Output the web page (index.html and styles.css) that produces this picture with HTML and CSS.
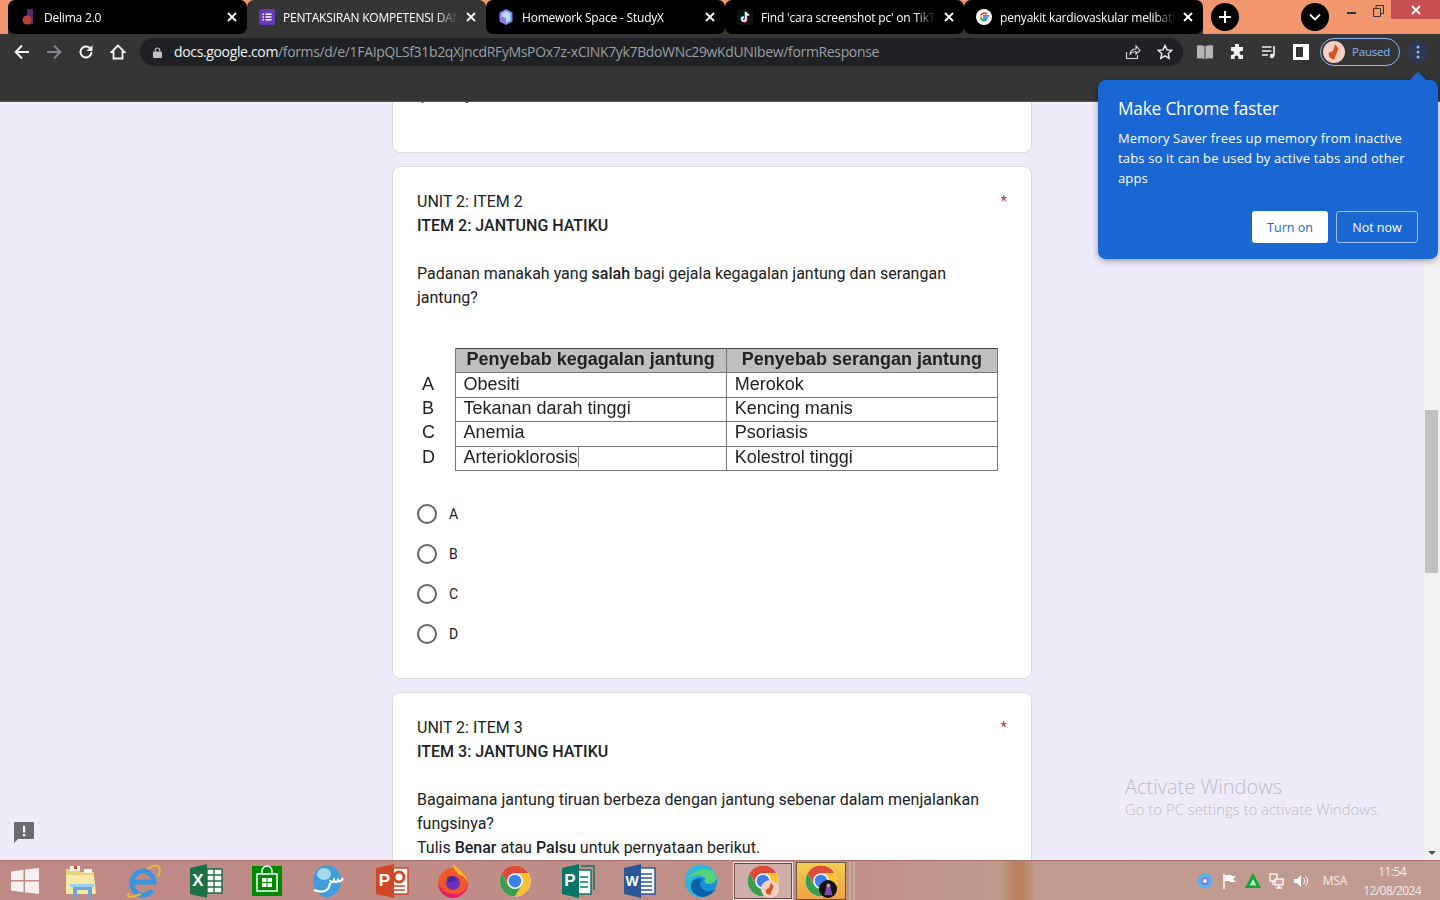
FILE: index.html
```html
<!DOCTYPE html>
<html>
  <head>
    <title>UNIT 2 - Google Forms</title>
    <link rel="stylesheet" href="styles.css">
  </head>
  <body>
    <svg class="defs" width="0" height="0">
      <symbol id="chrome" viewBox="0 0 48 48">
        <circle cx="24" cy="24" r="22" fill="#fff"/>
        <path fill="#dd4b39" d="M24 2a22 22 0 0 1 19.05 11H24a11 11 0 0 0-9.53 16.5L5 13A22 22 0 0 1 24 2z"/>
        <path fill="#fbc02d" d="M43.05 13A22 22 0 0 1 24 46l9.53-16.5A11 11 0 0 0 24 13z"/>
        <path fill="#3c9d4e" d="M24 46A22 22 0 0 1 5 13l9.47 16.5a11 11 0 0 0 19.06 0z"/>
        <circle cx="24" cy="24" r="9" fill="#3f7fe8"/>
      </symbol>
      <symbol id="close" viewBox="0 0 10 10">
        <path d="M1 1l8 8M9 1l-8 8" stroke="#fff" stroke-width="1.8" fill="none"/>
      </symbol>
    </svg>

    <div class="tabbar">
      <div class="tabs">
        <div class="tab first">
          <svg class="favicon" viewBox="0 0 16 16"><rect x="7" y="0" width="6" height="15" rx="1" fill="#5a2a6e"/><circle cx="7" cy="11" r="4.5" fill="#b8443f"/></svg>
          <span class="tab-title">Delima 2.0</span>
          <svg class="tab-close"><use href="#close"/></svg>
        </div>
        <div class="tab active">
          <svg class="favicon" viewBox="0 0 16 16"><rect width="16" height="16" rx="2" fill="#673ab7"/><path d="M3.5 4.5h1.5v1.500H3.500zM3.500 7.250h1.500v1.500H3.500zM3.500 10h1.500v1.500H3.500zM6.500 4.500h6v1.500h-6zM6.500 7.250h6v1.500h-6zM6.500 10h6v1.500h-6z" fill="#fff"/></svg>
          <span class="tab-title">PENTAKSIRAN KOMPETENSI DAN</span>
          <svg class="tab-close"><use href="#close"/></svg>
        </div>
        <div class="tab">
          <svg class="favicon" viewBox="0 0 16 16"><path d="M8 0l6.500 3.500v9L8 16l-6.500-3.500v-9z" fill="#8f7bf0"/><path d="M8 2l4.500 2.500v7L8 14z" fill="#a5e4f5"/><path d="M8 2L3.500 4.500v3L8 9z" fill="#d7c8fb"/></svg>
          <span class="tab-title">Homework Space - StudyX</span>
          <svg class="tab-close"><use href="#close"/></svg>
        </div>
        <div class="tab">
          <svg class="favicon" viewBox="0 0 16 16"><rect width="16" height="16" rx="3" fill="#111"/><path d="M9 3v7.200a2 2 0 1 1-2-2M9 3c.3 1.800 1.400 2.800 3 3" fill="none" stroke="#25f4ee" stroke-width="1.600" transform="translate(-.6 -.4)"/><path d="M9 3v7.200a2 2 0 1 1-2-2M9 3c.3 1.800 1.400 2.800 3 3" fill="none" stroke="#fe2c55" stroke-width="1.600" transform="translate(.6 .4)"/><path d="M9 3v7.200a2 2 0 1 1-2-2M9 3c.3 1.800 1.400 2.800 3 3" fill="none" stroke="#fff" stroke-width="1.400"/></svg>
          <span class="tab-title">Find 'cara screenshot pc' on TikTok</span>
          <svg class="tab-close"><use href="#close"/></svg>
        </div>
        <div class="tab last">
          <svg class="favicon" viewBox="0 0 16 16"><circle cx="8" cy="8" r="8" fill="#fff"/><path d="M13.300 6.900H8v2.200h3.100a3.300 3.300 0 0 1-6.300-1.100" fill="none" stroke="#4285f4" stroke-width="1.700"/><path d="M11 5.200A3.800 3.800 0 0 0 5 6" fill="none" stroke="#ea4335" stroke-width="1.700"/><path d="M5 6a4 4 0 0 0 0 3.500" fill="none" stroke="#fbbc05" stroke-width="1.700"/><path d="M5 9.800a3.800 3.800 0 0 0 6 .7" fill="none" stroke="#34a853" stroke-width="1.700"/></svg>
          <span class="tab-title">penyakit kardiovaskular melibatkan</span>
          <svg class="tab-close"><use href="#close"/></svg>
        </div>
      </div>
      <div class="round-btn new-tab">
        <svg width="14" height="14" viewBox="0 0 14 14"><path d="M7 1v12M1 7h12" stroke="#fff" stroke-width="2"/></svg>
      </div>
      <div class="round-btn tab-search">
        <svg width="12" height="8" viewBox="0 0 12 8"><path d="M1 1.500l5 5 5-5" stroke="#fff" stroke-width="1.800" fill="none"/></svg>
      </div>
      <div class="win-controls">
        <div class="win-btn">
          <svg width="10" height="10" viewBox="0 0 10 10"><rect x="0" y="6" width="9" height="2" fill="#333"/></svg>
        </div>
        <div class="win-btn">
          <svg width="11" height="12" viewBox="0 0 11 12"><path d="M.5 3.500h7v8h-7zM3 3.500V.500h7.500v8H7.500" fill="none" stroke="#333"/></svg>
        </div>
        <div class="win-close">
          <svg width="10" height="10"><use href="#close"/></svg>
        </div>
      </div>
    </div>

    <div class="toolbar">
      <div class="nav-icons">
        <svg class="tool" viewBox="0 0 16 16"><path d="M15 8H2M8 1.500L1.700 8 8 14.500" stroke="#f1f3f4" stroke-width="2" fill="none"/></svg>
        <svg class="tool" viewBox="0 0 16 16"><path d="M1 8h13M8 1.500L14.300 8 8 14.500" stroke="#80868b" stroke-width="2" fill="none"/></svg>
        <svg class="tool" viewBox="0 0 16 16"><path d="M13.500 8A5.500 5.500 0 1 1 11.800 4" stroke="#f1f3f4" stroke-width="2" fill="none"/><path d="M14.500 1v6h-6z" fill="#f1f3f4"/></svg>
        <svg class="tool" viewBox="0 0 16 16"><path d="M8 1.500L1.500 8H3.500v6.500h9V8h2z" stroke="#f1f3f4" stroke-width="1.800" fill="none"/></svg>
      </div>
      <div class="omnibox">
        <svg class="lock" viewBox="0 0 10 12"><path d="M2.500 5V3.500a2.500 2.500 0 0 1 5 0V5" stroke="#bdc1c6" fill="none" stroke-width="1.300"/><rect y="5" width="10" height="7" rx="1" fill="#bdc1c6"/></svg>
        <span class="url"><span class="url-host">docs.google.com</span>/forms/d/e/1FAIpQLSf31b2qXjncdRFyMsPOx7z-xCINK7yk7BdoWNc29wKdUNIbew/formResponse</span>
        <svg class="omni-icon" viewBox="0 0 16 16"><path d="M1.500 8v6.500h11V11M5 10c.5-3 3-5 6-5V2l4 4.500L11 10V7.500c-2.500 0-4.500 1-6 2.500z" stroke="#dadce0" stroke-width="1.100" fill="none"/></svg>
        <svg class="omni-icon" viewBox="0 0 16 16"><path d="M8 1.500l2 4.400 4.800.5-3.600 3.200 1 4.700L8 11.900l-4.200 2.400 1-4.700L1.200 6.400 6 5.900z" stroke="#f1f3f4" stroke-width="1.400" fill="none"/></svg>
      </div>
      <div class="ext-icons">
        <svg class="tool" viewBox="0 0 16 16"><path d="M0 1.500c2.500-.5 5-.5 7.500.5v13C5 14 2.500 14 0 14.500zM16 1.500c-2.500-.5-5-.5-7.500.5v13c2.500-1 5-1 7.500-.5z" fill="#b5b5b5"/></svg>
        <svg class="tool" viewBox="0 0 16 16"><path d="M6 1a2 2 0 0 1 4 0v2h4v4h-1.500a2 2 0 0 0 0 4H14v4H9.500v-1.500a2 2 0 0 0-4 0V15H2v-4h1a2 2 0 0 0 0-4H2V3h4z" fill="#f1f3f4"/></svg>
        <svg class="tool" viewBox="0 0 16 16"><path d="M1 3h9.500M1 7h9.500M1 11h6" stroke="#f1f3f4" stroke-width="1.600"/><path d="M13 2v9.500" stroke="#f1f3f4" stroke-width="1.600"/><circle cx="11" cy="12" r="2.200" fill="#f1f3f4"/></svg>
        <svg class="tool" viewBox="0 0 16 16"><rect x="1.500" y="1.500" width="13" height="13" fill="none" stroke="#fff" stroke-width="3"/><rect x="10" y="1" width="5" height="14" fill="#fff"/></svg>
      </div>
      <div class="profile">
        <svg class="avatar" viewBox="0 0 20 20"><circle cx="10" cy="10" r="10" fill="#f6d2c4"/><path d="M11 3l3 4-2 5-2 5-4-2-1-4 4-2z" fill="#d9561d"/></svg>
        <span class="profile-label">Paused</span>
      </div>
      <div class="menu-btn">
        <svg width="4" height="14" viewBox="0 0 4 14"><circle cx="2" cy="2" r="1.500" fill="#8ab4f8"/><circle cx="2" cy="7" r="1.500" fill="#8ab4f8"/><circle cx="2" cy="12" r="1.500" fill="#8ab4f8"/></svg>
      </div>
    </div>

    <div class="viewport">
      <div class="page">
        <div class="card card-cut">
          <div class="prev-answer"><div class="prev-line">pilihan y</div></div>
        </div>

        <div class="card">
          <div class="q-head">
            <div>
              <div>UNIT 2: ITEM 2</div>
              <div class="bold">ITEM 2: JANTUNG HATIKU</div>
            </div>
            <span class="req">*</span>
          </div>
          <p class="q-text">Padanan manakah yang <b>salah</b> bagi gejala kegagalan jantung dan serangan jantung?</p>
          <table class="q-table">
            <tr class="head"><th></th><th>Penyebab kegagalan jantung</th><th>Penyebab serangan jantung</th></tr>
            <tr><td class="letter">A</td><td>Obesiti</td><td>Merokok</td></tr>
            <tr><td class="letter">B</td><td>Tekanan darah tinggi</td><td>Kencing manis</td></tr>
            <tr><td class="letter">C</td><td>Anemia</td><td>Psoriasis</td></tr>
            <tr><td class="letter">D</td><td><span class="cursor">Arterioklorosis</span></td><td>Kolestrol tinggi</td></tr>
          </table>
          <div class="options">
            <div class="option"><span class="radio"></span>A</div>
            <div class="option"><span class="radio"></span>B</div>
            <div class="option"><span class="radio"></span>C</div>
            <div class="option"><span class="radio"></span>D</div>
          </div>
        </div>

        <div class="card">
          <div class="q-head">
            <div>
              <div>UNIT 2: ITEM 3</div>
              <div class="bold">ITEM 3: JANTUNG HATIKU</div>
            </div>
            <span class="req">*</span>
          </div>
          <p class="q-text">Bagaimana jantung tiruan berbeza dengan jantung sebenar dalam menjalankan fungsinya?<br>Tulis <b>Benar</b> atau <b>Palsu</b> untuk pernyataan berikut.</p>
        </div>
      </div>

      <div class="scrollbar">
        <div class="thumb"></div>
        <div class="arrow-down"></div>
      </div>

      <svg class="feedback" viewBox="0 0 22 22"><path d="M2 1h18a1 1 0 0 1 1 1v15a1 1 0 0 1-1 1H5l-4 4V2a1 1 0 0 1 1-1z" fill="#6a6a70"/><rect x="10" y="5" width="2.200" height="6.500" fill="#fff"/><rect x="10" y="13" width="2.200" height="2.200" fill="#fff"/></svg>

      <div class="watermark">
        <div class="wm-title">Activate Windows</div>
        <div class="wm-sub">Go to PC settings to activate Windows.</div>
      </div>

      <div class="bubble">
        <div class="bubble-title">Make Chrome faster</div>
        <div class="bubble-text">Memory Saver frees up memory from inactive tabs so it can be used by active tabs and other apps</div>
        <div class="bubble-btns">
          <div class="btn-on">Turn on</div>
          <div class="btn-off">Not now</div>
        </div>
      </div>
    </div>

    <div class="taskbar">
      <div class="task-apps">
        <div class="app">
          <svg class="win-logo" viewBox="0 0 28 26"><path d="M0 3.500L12.500 1.800V12H0zM14 1.600L28 0v12H14zM0 13.500h12.500v10.700L0 22.500zM14 13.500h14V26l-14-1.800z" fill="#f6f1f0"/></svg>
        </div>
        <div class="app">
          <svg class="app-icon" viewBox="0 0 36 36"><path d="M3 6h12l2 3h14v22H3z" fill="#e8d27a"/><path d="M3 12h28l2 19H3z" fill="#f7e9a5"/><rect x="7" y="3" width="10" height="5" fill="#f3f3e8"/><rect x="11" y="3" width="3" height="3" fill="#c94a3a"/><rect x="21" y="6" width="8" height="4" fill="#f3f3e8"/><path d="M10 35V25a3 3 0 0 1 3-3h13a3 3 0 0 1 3 3v10h-4v-8H14v8z" fill="#6aa8d8"/><rect x="7" y="21" width="24" height="3" fill="#9bd0f0"/></svg>
        </div>
        <div class="app">
          <svg class="app-icon" viewBox="0 0 36 36"><path d="M8 19h21A11 12 0 1 0 27 27" fill="none" stroke="#3a94e0" stroke-width="5"/><path d="M4 30C0 36 8 34 16 31M22 6c10-6 16-4 11 8" fill="none" stroke="#e7b93a" stroke-width="2"/></svg>
        </div>
        <div class="app">
          <svg class="app-icon" viewBox="0 0 36 36"><rect x="16" y="6" width="19" height="24" fill="#fff" stroke="#1d7044" stroke-width="1.500"/><path d="M20 6v24M27 6v24M16 12h19M16 18h19M16 24h19" stroke="#1d7044" stroke-width="1.400"/><path d="M3 5l17-4v34L3 31z" fill="#1d7044"/><text class="app-letter" x="11" y="23" text-anchor="middle">X</text></svg>
        </div>
        <div class="app">
          <svg class="app-icon" viewBox="0 0 36 36"><rect x="3" y="3" width="30" height="30" fill="#008a00"/><path d="M8 11h20v17H8z" fill="none" stroke="#fff" stroke-width="1.500"/><path d="M13 11V8a5 5 0 0 1 10 0v3" fill="none" stroke="#fff" stroke-width="1.500"/><path d="M13 15h4.500v4H13zM18.500 15H23v4h-4.500zM13 20h4.500v4H13zM18.500 20H23v4h-4.500z" fill="#fff"/></svg>
        </div>
        <div class="app">
          <svg class="app-icon" viewBox="0 0 36 36"><ellipse cx="16" cy="18" rx="14" ry="16" fill="#3f9ddb"/><ellipse cx="13" cy="11" rx="7" ry="6" fill="#a6d8f2"/><path d="M3 27c8 3 15 2 16-7M19 17c1 3 3 3 4 0 1 3 3 3 4 0 1 2 3 2 5-2" fill="none" stroke="#fff" stroke-width="2.200"/></svg>
        </div>
        <div class="app">
          <svg class="app-icon" viewBox="0 0 36 36"><rect x="16" y="5" width="19" height="26" fill="#fff" stroke="#d24726" stroke-width="1.500"/><circle cx="26" cy="14" r="5" fill="none" stroke="#d24726" stroke-width="3"/><path d="M20 23h12M20 27h12" stroke="#d24726" stroke-width="1.600"/><path d="M3 5l18-4v34L3 31z" fill="#d24726"/><text class="app-letter" x="11.500" y="23" text-anchor="middle">P</text></svg>
        </div>
        <div class="app">
          <svg class="app-icon" viewBox="0 0 36 36"><circle cx="18" cy="20" r="15" fill="#f0572b"/><path d="M3 20c0 8 7 15 15 15s15-7 15-15c-2 8-8 12-15 11C10 30 6 26 3 20z" fill="#e3206f"/><path d="M18 1c5 5 14 9 15 19-2-5-6-8-10-9-2-4-5-5-5-10z" fill="#fbb62c"/><circle cx="18" cy="20" r="7" fill="#6d32b8"/><path d="M12 15c4-3 9-1 10 3-3-1-6 0-8 2z" fill="#3f2a9c"/></svg>
        </div>
        <div class="app">
          <svg class="app-icon large"><use href="#chrome"/></svg>
        </div>
        <div class="app">
          <svg class="app-icon" viewBox="0 0 36 36"><rect x="16" y="7" width="16" height="24" fill="#fff" stroke="#077568" stroke-width="1.500"/><path d="M22 3h13v24" fill="none" stroke="#077568" stroke-width="1.500"/><path d="M21 14h8M21 19h8M21 24h8" stroke="#077568" stroke-width="1.500"/><path d="M3 5l17-4v34L3 31z" fill="#077568"/><text class="app-letter" x="11" y="23" text-anchor="middle">P</text></svg>
        </div>
        <div class="app">
          <svg class="app-icon" viewBox="0 0 36 36"><rect x="16" y="5" width="18" height="26" fill="#fff" stroke="#2b579a" stroke-width="1.500"/><path d="M20 11h11M20 15h11M20 19h11M20 23h11M20 27h11" stroke="#2b579a" stroke-width="1.600"/><path d="M3 5l17-4v34L3 31z" fill="#2b579a"/><text class="app-letter small" x="11" y="23" text-anchor="middle">W</text></svg>
        </div>
        <div class="app">
          <svg class="app-icon" viewBox="0 0 36 36"><circle cx="18" cy="18" r="16" fill="#1b8fd6"/><path d="M2 18A16 16 0 0 1 33 12c2 5-2 9-7 9-4 0-6-3-3-5-7-5-17 0-15 9 1 5 6 8 12 9A16 16 0 0 1 2 18z" fill="#2bb9d9"/><path d="M33 12c2 5-2 9-7 9-4 0-6-3-3-5-4-7-16-5-19 2C6 7 28 1 33 12z" fill="#56d27a"/><path d="M8 25c1 5 6 8 12 9 6-1 10-4 13-8-6 4-12 3-15-2-2-3-1-6 2-8-6-2-13 2-12 9z" fill="#0b5fa8"/></svg>
        </div>
        <div class="app running current">
          <svg class="app-icon large"><use href="#chrome"/></svg>
          <svg class="app-badge" viewBox="0 0 20 20"><circle cx="10" cy="10" r="10" fill="#f6d2c4"/><path d="M11 3l3 4-2 5-2 5-4-2-1-4 4-2z" fill="#d9561d"/></svg>
        </div>
        <div class="app running highlight">
          <svg class="app-icon large"><use href="#chrome"/></svg>
          <svg class="app-badge" viewBox="0 0 20 20"><circle cx="10" cy="10" r="10" fill="#111"/><path d="M6 17l2-9a2.500 2.500 0 0 1 5 0l2 9z" fill="#7e4bb0"/><circle cx="10.500" cy="6" r="2.200" fill="#caa08a"/></svg>
        </div>
        <div class="grip"></div>
      </div>
      <div class="tray">
        <svg class="tray-icon" viewBox="0 0 16 16"><circle cx="8" cy="8" r="7.500" fill="#4cb4ee"/><circle cx="8" cy="8" r="4" fill="#8a7ac8"/><circle cx="8" cy="8" r="2" fill="#cfe7f7"/></svg>
        <svg class="tray-icon" viewBox="0 0 16 16"><path d="M3 1v15" stroke="#fff" stroke-width="1.500"/><path d="M4 2h6l1 1h4l-3 3 3 3H9L8 8H4z" fill="#fff"/></svg>
        <svg class="tray-icon" viewBox="0 0 16 16"><path d="M8 0l8 15H0z" fill="#0fa63c"/><path d="M8 6l3.500 6.500h-7z" fill="#bfe9c0"/></svg>
        <svg class="tray-icon" viewBox="0 0 16 16"><rect x="1" y="1" width="7" height="7" fill="none" stroke="#fff" stroke-width="1.300"/><rect x="6" y="6" width="8" height="6" fill="#c8a8a0" stroke="#fff" stroke-width="1.300"/><path d="M10 12v3M7 15h6M4 8v4" stroke="#fff" stroke-width="1.300"/></svg>
        <svg class="tray-icon" viewBox="0 0 16 16"><path d="M1 6h3l4-4v12l-4-4H1z" fill="#fff"/><path d="M10.500 5a4 4 0 0 1 0 6M12.500 3a7 7 0 0 1 0 10" stroke="#fff" fill="none"/></svg>
        <span class="tray-lang">MSA</span>
        <div class="clock"><div>11:54</div><div>12/08/2024</div></div>
      </div>
    </div>
  </body>
</html>
```

FILE: styles.css
```css
* {
  box-sizing: border-box;
}
body {
  margin: 0;
  height: 900px;
  display: flex;
  flex-direction: column;
  overflow: hidden;
  font-family: "Open Sans", "Noto Sans", sans-serif;
}
.defs {
  position: absolute;
}

/* tab strip */
.tabbar {
  height: 34px;
  flex: none;
  display: flex;
  padding-left: 8px;
  background: #f2976f;
}
.tabs {
  display: flex;
  background: linear-gradient(#f2976f 50%, #353535 50%);
}
.tab {
  width: 239px;
  height: 34px;
  display: flex;
  align-items: center;
  padding: 0 10px 0 12px;
  background: #000;
  color: #fff;
  border-radius: 7px;
  font-size: 12px;
  letter-spacing: -0.2px;
}
.tab.active {
  background: #353535;
  border-radius: 7px 7px 0 0;
}
.favicon {
  width: 16px;
  height: 16px;
  flex: none;
  margin-right: 8px;
}
.tab-title {
  flex: 1;
  min-width: 0;
  white-space: nowrap;
  overflow: hidden;
  -webkit-mask-image: linear-gradient(90deg, #000 88%, transparent);
  mask-image: linear-gradient(90deg, #000 88%, transparent);
}
.tab-close {
  width: 10px;
  height: 10px;
  flex: none;
  margin-left: 8px;
}
.round-btn {
  width: 28px;
  height: 28px;
  border-radius: 50%;
  background: #000;
  display: flex;
  align-items: center;
  justify-content: center;
  margin-top: 3px;
}
.new-tab {
  margin-left: 8px;
}
.tab-search {
  margin-left: 62px;
}
.win-controls {
  margin-left: auto;
  display: flex;
  height: 19px;
}
.win-btn {
  width: 26px;
  height: 19px;
  padding-top: 2px;
  display: flex;
  align-items: center;
  justify-content: center;
}
.win-close {
  width: 49px;
  height: 19px;
  background: #c75050;
  display: flex;
  align-items: center;
  justify-content: center;
}

/* toolbar */
.toolbar {
  height: 68px;
  flex: none;
  display: flex;
  align-items: flex-start;
  padding-top: 4px;
  background: #353535;
  border-bottom: 1px solid #555;
}
.nav-icons {
  display: flex;
  width: 140px;
  height: 28px;
  align-items: center;
  padding-left: 14px;
  gap: 16px;
}
.tool {
  width: 16px;
  height: 16px;
  flex: none;
}
.omnibox {
  width: 1043px;
  height: 28px;
  flex: none;
  background: #202124;
  border-radius: 14px;
  display: flex;
  align-items: center;
  padding-left: 13px;
  padding-right: 10px;
}
.lock {
  width: 9px;
  height: 11px;
  flex: none;
}
.url {
  margin-left: 12px;
  margin-bottom: 1px;
  flex: 1;
  white-space: nowrap;
  font-size: 14px;
  letter-spacing: -0.35px;
  color: #9aa0a6;
}
.url-host {
  color: #f1f3f4;
}
.omni-icon {
  width: 16px;
  height: 16px;
  flex: none;
  margin-left: 16px;
}
.ext-icons {
  display: flex;
  height: 28px;
  align-items: center;
  gap: 16px;
  padding-left: 14px;
}
.profile {
  width: 80px;
  height: 28px;
  margin-left: 11px;
  flex: none;
  display: flex;
  align-items: center;
  border: 1px solid #8ab4f8;
  border-radius: 14px;
  padding-left: 2px;
}
.avatar {
  width: 22px;
  height: 22px;
}
.profile-label {
  margin-left: 7px;
  margin-bottom: 1px;
  font-size: 11.5px;
  letter-spacing: -0.2px;
  color: #8ab4f8;
}
.menu-btn {
  width: 22px;
  height: 22px;
  margin: 3px 0 0 7px;
  border-radius: 50%;
  background: #2f3a50;
  display: flex;
  align-items: center;
  justify-content: center;
}

/* page */
.viewport {
  flex: 1;
  min-height: 0;
  display: flex;
  position: relative;
  background: #f0ebf8;
}
.page {
  flex: 1;
  min-width: 0;
  display: flex;
  flex-direction: column;
  align-items: center;
  gap: 13px;
  overflow: hidden;
  font-family: Roboto, sans-serif;
  font-size: 16px;
  line-height: 24px;
  color: #202124;
}
.card {
  width: 640px;
  flex: none;
  background: #fff;
  border: 1px solid #dadce0;
  border-radius: 8px;
  padding: 23px 24px 34px;
}
.card-cut {
  height: 51px;
  border-top: 0;
  border-radius: 0 0 8px 8px;
  padding: 0 24px;
  overflow: hidden;
}
.prev-answer {
  height: 11px;
  background: #f8f9fa;
  padding-left: 4px;
  font-size: 14px;
}
.prev-line {
  line-height: 14px;
  margin-top: -14px;
}
.q-head {
  display: flex;
  justify-content: space-between;
}
.bold {
  font-weight: 500;
}
.q-text b {
  font-weight: 500;
}
.req {
  color: #d93025;
  line-height: 23px;
  font-size: 15px;
}
.q-text {
  margin: 24px 0 0;
}
.q-table {
  margin-top: 38px;
  width: 581px;
  table-layout: fixed;
  border-collapse: collapse;
  font-family: "Liberation Sans", Arial, sans-serif;
  font-size: 18px;
  line-height: 20px;
  color: #222;
  filter: blur(0.35px);
}
.q-table th,
.q-table td {
  height: 24.4px;
  padding: 0 0 3px 8px;
  border: 1px solid #777;
  text-align: left;
  white-space: nowrap;
}
.q-table th:first-child,
.q-table td.letter {
  width: 38px;
  padding: 0 0 3px 5px;
  border: 0;
  border-right: 1px solid #777;
}
.q-table .head th {
  background: #bfbfbf;
  font-size: 18px;
  font-weight: 700;
  padding: 0 0 3px;
  text-align: center;
  border-top: 1px solid #444;
}
.q-table .head th:first-child {
  background: none;
  border-top: 0;
}
.cursor {
  border-right: 1px solid #888;
}
.options {
  margin-top: 33px;
  display: flex;
  flex-direction: column;
  gap: 20px;
}
.option {
  display: flex;
  align-items: center;
  height: 20px;
  font-size: 14px;
  line-height: 20px;
}
.radio {
  width: 20px;
  height: 20px;
  margin-right: 12px;
  border: 2px solid #5f6368;
  border-radius: 50%;
}
.scrollbar {
  width: 16px;
  flex: none;
  display: flex;
  flex-direction: column;
  align-items: flex-start;
  padding: 308px 0 5px 1px;
  background: #f1f1f1;
}
.thumb {
  width: 13px;
  height: 163px;
  background: #c1c1c1;
}
.arrow-down {
  margin-top: auto;
  margin-left: 3px;
  border-top: 4px solid #505050;
  border-left: 4px solid transparent;
  border-right: 4px solid transparent;
}
.feedback {
  position: absolute;
  left: 13px;
  top: 719px;
  width: 22px;
  height: 22px;
}
.watermark {
  position: absolute;
  left: 1125px;
  top: 671px;
  color: #bcbac2;
  font-weight: 300;
  white-space: nowrap;
}
.wm-title {
  font-size: 20px;
  line-height: 27px;
}
.wm-sub {
  font-size: 14.9px;
  line-height: 19px;
}

/* memory saver bubble */
.bubble {
  position: absolute;
  left: 1098px;
  top: -22px;
  width: 340px;
  height: 179px;
  padding: 16px 20px;
  background: #1967d2;
  border-radius: 8px;
  box-shadow: 0 2px 6px rgba(0, 0, 0, 0.35);
  color: #fff;
}
.bubble::before {
  content: "";
  position: absolute;
  right: 12px;
  top: -8px;
  width: 16px;
  height: 16px;
  background: #1967d2;
  transform: rotate(45deg) scale(0.72);
}
.bubble-title {
  font-size: 17.3px;
  line-height: 26px;
  letter-spacing: -0.2px;
}
.bubble-text {
  margin-top: 6px;
  font-size: 13px;
  line-height: 20px;
  letter-spacing: 0.15px;
}
.bubble-btns {
  position: absolute;
  right: 20px;
  bottom: 16px;
  display: flex;
  gap: 8px;
  font-size: 12.5px;
}
.btn-on,
.btn-off {
  height: 32px;
  display: flex;
  align-items: center;
  justify-content: center;
  border-radius: 3px;
}
.btn-on {
  width: 76px;
  background: #fff;
  color: #1967d2;
}
.btn-off {
  width: 82px;
  border: 1px solid #a3c2ee;
}

/* windows taskbar */
.taskbar {
  height: 40px;
  flex: none;
  display: flex;
  align-items: center;
  justify-content: space-between;
  border-top: 1px solid #a9706b;
  background: linear-gradient(90deg, #bf8985 0%, #bf9088 60%, #bf9a8d 69.500%, #b98360 70.400%, #b98360 71%, #c19b8f 71.900%, #c19a90 100%);
}
.task-apps {
  display: flex;
  align-items: center;
  height: 39px;
}
.app {
  width: 62px;
  height: 39px;
  display: flex;
  align-items: center;
  justify-content: center;
  position: relative;
}
.app:first-child {
  width: 50px;
}
.app-icon {
  width: 36px;
  height: 36px;
}
.app-icon.large {
  width: 34px;
  height: 36px;
}
.win-logo {
  width: 28px;
  height: 26px;
}
.app-letter {
  fill: #fff;
  font-family: "Liberation Sans", sans-serif;
  font-size: 17px;
  font-weight: 700;
}
.app-letter.small {
  font-size: 14px;
}
.app.running {
  border: 1px solid #efe4e0;
  outline: 1px solid #6d4a45;
  outline-offset: -2px;
  margin-right: 3px;
  height: 38px;
}
.app.current {
  width: 60px;
  margin-left: 1px;
  background: #cfaea9;
}
.app.highlight {
  width: 50px;
  border-color: #6d5b3c;
  outline: 0;
  background: linear-gradient(#f0d04f, #f0a044);
}
.app-badge {
  position: absolute;
  right: 13px;
  bottom: 1px;
  width: 18px;
  height: 18px;
}
.app.highlight .app-badge {
  right: 8px;
}
.grip {
  width: 6px;
  height: 38px;
  border-left: 2px solid #c9aba5;
  border-right: 2px solid #c9aba5;
}
.tray {
  display: flex;
  align-items: center;
  gap: 8px;
  padding-right: 19px;
  color: #f7eeec;
  font-size: 12px;
  letter-spacing: -0.3px;
}
.tray-icon {
  width: 16px;
  height: 16px;
}
.tray-lang {
  margin-left: 6px;
  letter-spacing: -0.1px;
}
.clock {
  margin-left: 8px;
  text-align: center;
  line-height: 19px;
  letter-spacing: -0.6px;
}
```
